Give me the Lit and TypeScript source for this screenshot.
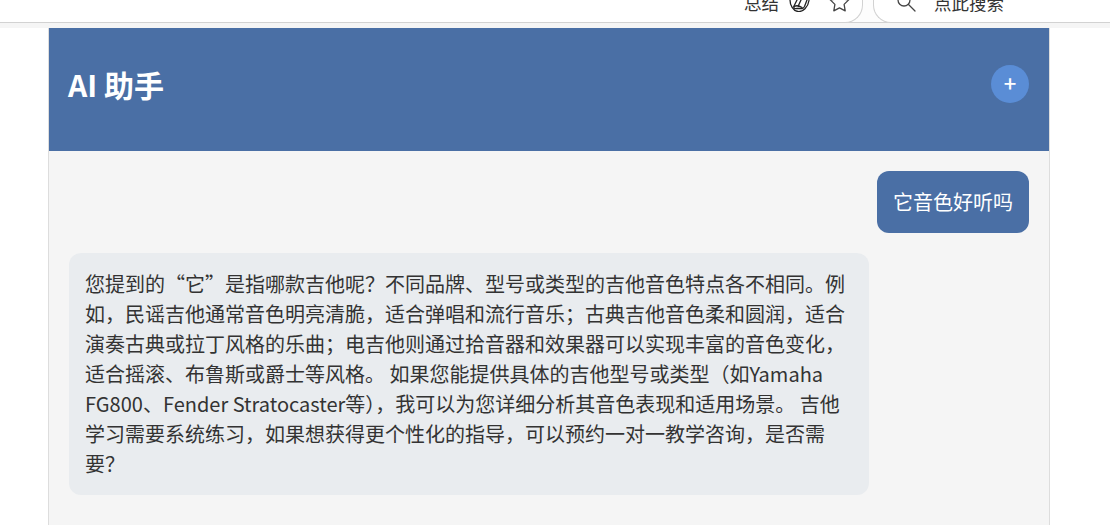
import { LitElement, html, css } from 'lit';
import { customElement, state } from 'lit/decorators.js';

type Msg = { from: 'user' | 'ai'; text: string };

@customElement('app-root')
export class AppRoot extends LitElement {
  static styles = css`
    :host {
      display: flex;
      flex-direction: column;
      height: 525px;
      overflow: hidden;
      background: #fff;
      font-family: 'Noto Sans CJK SC', 'Noto Sans', sans-serif;
      color: #333;
    }
    /* browser chrome, cut off at the top of the shot */
    .toolbar {
      display: flex;
      flex: none;
      gap: 10px;
      height: 23px;
      overflow: hidden;
      background: #fdfdfd;
      box-shadow: inset 0 -1px #d2d2d2;
    }
    .pill {
      display: flex;
      align-items: flex-end;
      box-sizing: border-box;
      height: 23px;
      padding-bottom: 10px;
      background: #fff;
      border-bottom: 1px solid #d2d2d2;
      font-size: 17.5px;
      line-height: 24px;
      color: #333;
    }
    .address {
      flex: 1;
      justify-content: flex-end;
      gap: 10px;
      padding-right: 12px;
      border-right: 1px solid #d2d2d2;
      border-bottom-right-radius: 18px;
    }
    .search {
      flex: none;
      width: 237px;
      gap: 18px;
      padding-left: 23px;
      border-left: 1px solid #d2d2d2;
      border-bottom-left-radius: 18px;
    }
    .pill span {
      margin-bottom: -3px;
    }
    .pill svg {
      flex: none;
      fill: none;
      stroke: #444;
      stroke-width: 1.3;
      stroke-linecap: round;
      stroke-linejoin: round;
    }
    .pill .summary {
      stroke: #222;
    }
    .star {
      margin-left: 9px;
    }
    .strip {
      flex: none;
      height: 5px;
      background: #f5f5f5;
    }
    .panel {
      display: flex;
      flex: 1;
      flex-direction: column;
      box-sizing: border-box;
      width: 1002px;
      margin-left: 48px;
      border: solid #ddd;
      border-width: 0 1px;
      background: #f5f5f5;
    }
    .header {
      display: flex;
      align-items: center;
      justify-content: space-between;
      padding: 35px 20px 46px 19px;
      background: #4a6fa5;
      color: #fff;
    }
    h1 {
      margin: 0;
      font-size: 30px;
      font-weight: 700;
      line-height: 42px;
    }
    .add {
      width: 38px;
      height: 38px;
      padding: 0 0 4px;
      border: none;
      border-radius: 50%;
      background: #5a8dd6;
      color: #fff;
      font: 500 22px/30px 'Noto Sans CJK SC', sans-serif;
    }
    .messages {
      display: flex;
      flex-direction: column;
      gap: 20px;
      padding: 20px;
    }
    .bubble {
      padding: 16px;
      border-radius: 12px;
      font-size: 20px;
      line-height: 30px;
    }
    .user {
      align-self: flex-end;
      background: #4a6fa5;
      color: #fff;
    }
    .ai {
      align-self: flex-start;
      width: 768px;
      background: #e9ecef;
    }
  `;

  @state() messages: Msg[] = [
    { from: 'user', text: '它音色好听吗' },
    {
      from: 'ai',
      text: '您提到的“它”是指哪款吉他呢\uFF1F不同品牌、型号或类型的吉他音色特点各不相同。例如\uFF0C民谣吉他通常音色明亮清脆\uFF0C适合弹唱和流行音乐\uFF1B古典吉他音色柔和圆润\uFF0C适合演奏古典或拉丁风格的乐曲\uFF1B电吉他则通过拾音器和效果器可以实现丰富的音色变化\uFF0C适合摇滚、布鲁斯或爵士等风格。 如果您能提供具体的吉他型号或类型\uFF08如Yamaha FG800、Fender Stratocaster等\uFF09\uFF0C我可以为您详细分析其音色表现和适用场景。 吉他学习需要系统练习\uFF0C如果想获得更个性化的指导\uFF0C可以预约一对一教学咨询\uFF0C是否需要\uFF1F',
    },
  ];

  render() {
    return html`
      <div class="toolbar" lang="zh-CN">
        <div class="pill address">
          <span>总结</span>
          <svg class="summary" width="21" height="21" viewBox="0 0 21 21">
            <path d="M1 9c0 5 3 11 8 11.500 5 .5 10-4 11-11" />
            <path d="M8 9 5 15c-.8 2 1 3 3 2.500h5c1 0 2-1 2.500-2L18 9" />
            <path d="M12 9 9 15.500M5 15.500c2-1 5-1 8 1" />
          </svg>
          <svg class="star" width="21" height="20" viewBox="0 0 21 20">
            <path d="M10.500 1.200 13.300 7l6.400.9-4.600 4.500 1.100 6.400-5.700-3-5.700 3 1.100-6.400L1.300 7.900 7.700 7z" />
          </svg>
        </div>
        <div class="pill search">
          <svg width="19" height="19" viewBox="0 0 19 19">
            <circle cx="7" cy="7" r="6" />
            <path d="M11.500 11.500 18 18" />
          </svg>
          <span>点此搜索</span>
        </div>
      </div>
      <div class="strip"></div>
      <main class="panel" lang="zh-CN">
        <header class="header">
          <h1>AI 助手</h1>
          <button class="add">+</button>
        </header>
        <section class="messages">
          ${this.messages.map((m) => html`<div class="bubble ${m.from}">${m.text}</div>`)}
        </section>
      </main>
    `;
  }
}
